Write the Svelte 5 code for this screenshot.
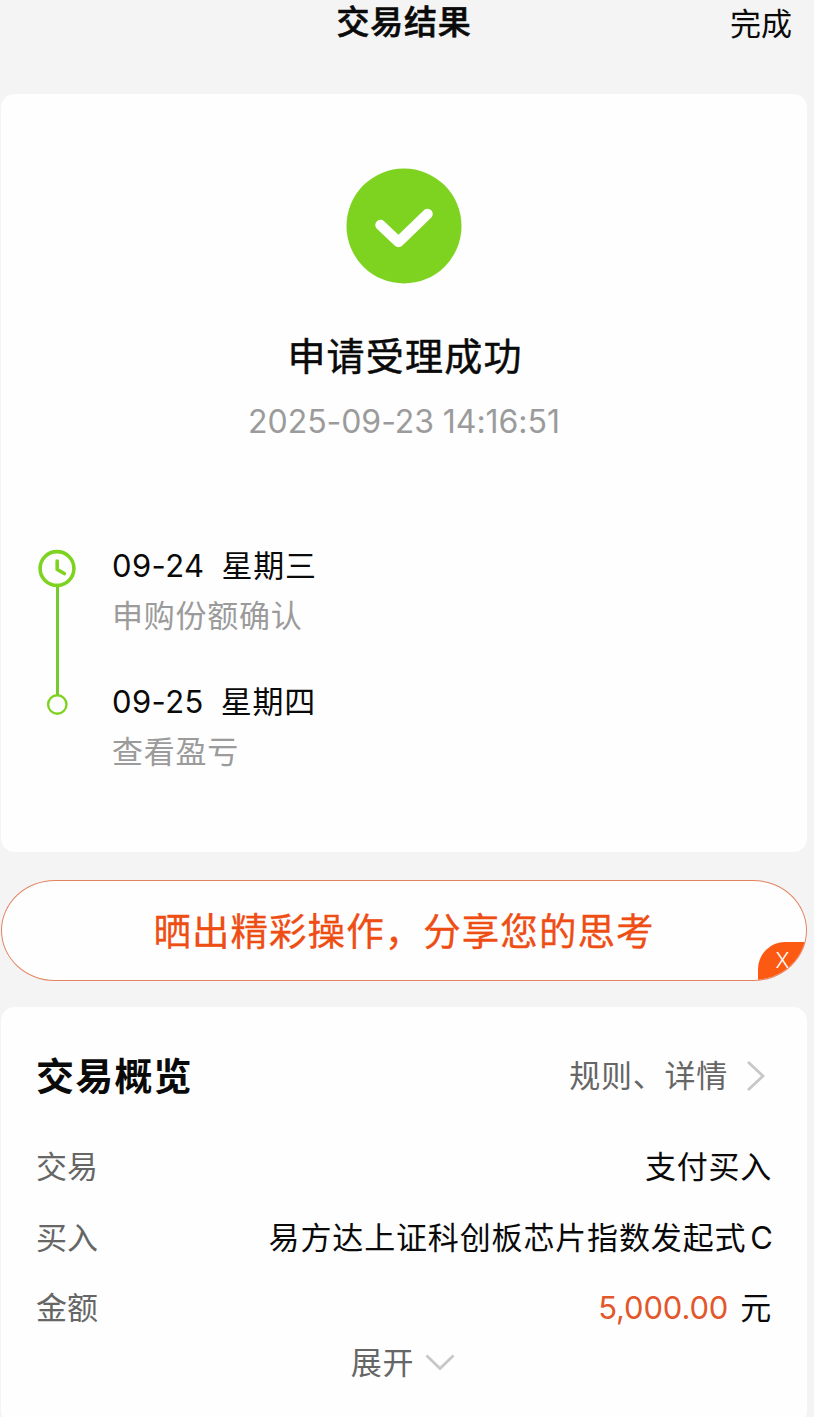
<script>
  const steps = [
    { date: '09-24', day: '星期三', note: '申购份额确认' },
    { date: '09-25', day: '星期四', note: '查看盈亏' }
  ];
</script>

<div class="page">
  <header>
    <span></span>
    <h1>交易结果</h1>
    <span class="done">完成</span>
  </header>

  <section class="card result">
    <svg class="badge" width="116" height="116" viewBox="0 0 116 116">
      <circle cx="58" cy="58" r="57.5" fill="#7ed321" />
      <path d="M34.5 57L52.5 74L81.5 46" fill="none" stroke="#fff" stroke-width="10.5" stroke-linecap="round" stroke-linejoin="round" />
    </svg>
    <h2>申请受理成功</h2>
    <p class="time">2025-09-23 14:16:51</p>

    <div class="timeline">
      <svg class="rail" width="40" height="170" viewBox="0 0 40 170" fill="none" stroke="#7ed321">
        <path d="M20.5 38V146" stroke="#74cb2c" stroke-width="3" />
        <circle cx="20" cy="19.5" r="16.9" stroke-width="3.6" />
        <path d="M20.2 12V20.5L27.3 24.5" stroke-width="3.6" stroke-linecap="round" stroke-linejoin="round" />
        <circle cx="20.3" cy="155.5" r="9.2" stroke-width="2.4" />
      </svg>
      <div class="steps">
        {#each steps as s}
          <div class="step">
            <div class="when"><span class="date">{s.date}</span><span>{s.day}</span></div>
            <div class="note">{s.note}</div>
          </div>
        {/each}
      </div>
    </div>
  </section>

  <section class="share">
    <span class="share-text">晒出精彩操作，分享您的思考</span>
    <span class="close">X</span>
  </section>

  <section class="card overview">
    <div class="head">
      <h3>交易概览</h3>
      <div class="rules">
        <span>规则、详情</span>
        <svg width="20" height="32" viewBox="0 0 20 32" fill="none" stroke="#c8c8c8" stroke-width="2.8">
          <path d="M2 2L17 16L2 30" />
        </svg>
      </div>
    </div>
    <div class="row"><span class="label">交易</span><span>支付买入</span></div>
    <div class="row"><span class="label">买入</span><span class="fund">易方达上证科创板芯片指数发起式<span class="cls">C</span></span></div>
    <div class="row"><span class="label">金额</span><span class="amount"><b>5,000.00</b><span>元</span></span></div>
    <div class="more">
      <span>展开</span>
      <svg width="30" height="18" viewBox="0 0 30 18" fill="none" stroke="#c8c8c8" stroke-width="2.8">
        <path d="M1.5 1.5L15 14.5L28.5 1.5" />
      </svg>
    </div>
  </section>
</div>

<style>
  :global(body) {
    margin: 0;
    background: #f4f4f4;
  }
  .page {
    box-sizing: border-box;
    width: 814px;
    height: 1417px;
    overflow: hidden;
    padding: 0 7px 0 1px;
    background: #f4f4f4;
    color: #0a0a0a;
    font-family: Inter, 'Noto Sans CJK SC', sans-serif;
    font-size: 31px;
    letter-spacing: 0.75px;
    line-height: 48px;
    white-space: nowrap;
  }
  h1, h2, h3, p {
    margin: 0;
  }
  header {
    display: grid;
    grid-template-columns: 1fr auto 1fr;
    height: 94px;
  }
  h1 {
    font-size: 33px;
    font-weight: 500;
    letter-spacing: 0.8px;
    line-height: 45px;
    -webkit-text-stroke: 0.6px;
  }
  .done {
    justify-self: end;
    padding-right: 15px;
    letter-spacing: 0;
  }
  .card {
    box-sizing: border-box;
    border-radius: 14px;
    background: #fefefe;
  }
  .result {
    display: flex;
    flex-direction: column;
    align-items: center;
    height: 758px;
    padding-top: 74px;
  }
  .badge {
    flex: none;
  }
  h2 {
    margin-top: 42px;
    padding-left: 2px;
    font-size: 38px;
    font-weight: 400;
    letter-spacing: 1.2px;
    line-height: 60px;
    -webkit-text-stroke: 0.5px;
  }
  .time {
    margin-top: 12px;
    color: #9b9b9b;
    font-size: 32px;
    letter-spacing: -0.05px;
  }
  .timeline {
    display: flex;
    align-self: stretch;
    gap: 35px;
    margin-top: 90px;
    padding-left: 36px;
  }
  .rail {
    flex: none;
    margin-top: 13px;
  }
  .steps {
    display: flex;
    flex-direction: column;
    gap: 37px;
    padding-top: 6px;
  }
  .when {
    display: flex;
    gap: 17px;
  }
  .date {
    letter-spacing: 0.4px;
  }
  .note {
    margin-top: 2px;
    margin-bottom: 1px;
    color: #9b9b9b;
  }
  .share {
    position: relative;
    box-sizing: border-box;
    display: flex;
    justify-content: center;
    align-items: center;
    height: 101px;
    margin: 28px 0 26px;
    overflow: hidden;
    border: 1.5px solid #e38361;
    border-radius: 54px / 50.5px;
    background: #fefefe;
    color: #ee4d14;
    font-size: 37.5px;
    letter-spacing: 1.05px;
  }
  .share-text {
    padding-top: 3px;
    -webkit-text-stroke: 0.3px;
  }
  .close {
    position: absolute;
    right: -1px;
    bottom: -1px;
    width: 49px;
    height: 39px;
    border-radius: 27px 0 0 0;
    background: #fc5a12;
    color: #fff;
    font-size: 21px;
    font-weight: 300;
    letter-spacing: 0;
    line-height: 38px;
    text-align: center;
  }
  .overview {
    height: 417px;
    padding: 39px 35px 0;
  }
  .head {
    display: flex;
    justify-content: space-between;
    align-items: center;
    height: 60px;
    margin-bottom: 37px;
  }
  h3 {
    font-size: 38px;
    font-weight: 700;
    letter-spacing: 1.2px;
  }
  .rules {
    display: flex;
    align-items: center;
    gap: 18px;
    padding-right: 6px;
    color: #666;
  }
  .row {
    display: flex;
    justify-content: space-between;
    height: 48px;
    margin-bottom: 22.5px;
  }
  .label {
    color: #666;
    letter-spacing: 0;
  }
  .fund {
    margin-right: -1px;
    letter-spacing: 0.85px;
  }
  .cls {
    margin-left: 4px;
    letter-spacing: 0;
  }
  .amount {
    display: flex;
    gap: 12px;
  }
  b {
    color: #e2572b;
    font-weight: 400;
    letter-spacing: -0.15px;
  }
  .more {
    display: flex;
    justify-content: center;
    align-items: center;
    gap: 11px;
    margin-top: -16px;
    padding-right: 2px;
    color: #666;
  }
</style>
